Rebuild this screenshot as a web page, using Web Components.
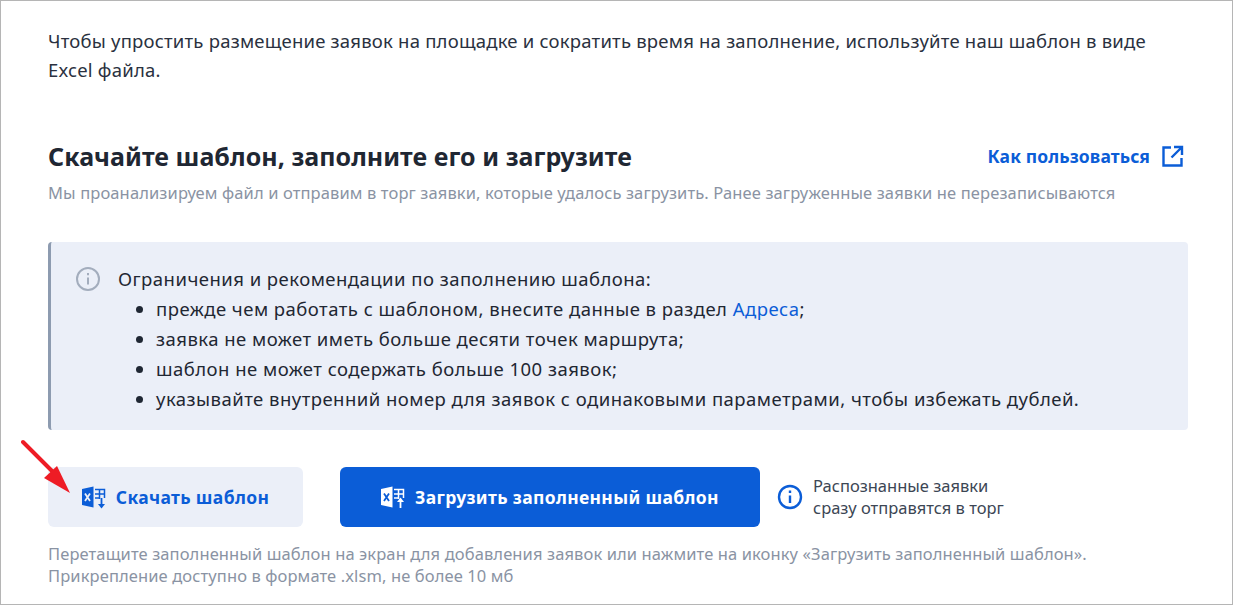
<!DOCTYPE html>
<html><head><meta charset="utf-8">
<style>
html,body{margin:0;background:#fff}
</style></head><body>
<import-page></import-page>
<script>
// иконка excel, стрелка вниз или вверх
const xlIcon = (arrow) => `<svg width="24" height="23" viewBox="0 0 24 23" fill="none"><path d="M0 3 11.500 .5v21L0 19z" fill="currentColor"/><path d="M3 7.500l5 7.500M8 7.500 3 15" stroke="var(--bg)" stroke-width="1.800"/><path d="M13 3.500H22.500V12M13 8H22.500M13 12H18M17.500 3.500V13" stroke="currentColor" stroke-width="1.500"/>${arrow == 'down' ? '<path d="M19.500 12v7" stroke="currentColor" stroke-width="1.800"/><path d="M16 18h7L19.500 22.500z" fill="currentColor"/>' : '<path d="M19.500 22v-7" stroke="currentColor" stroke-width="1.800"/><path d="M16 16h7L19.500 11.500z" fill="currentColor"/>'}</svg>`

class XBtn extends HTMLElement {
  constructor() {
    super()
    this.attachShadow({mode: 'open'})
  }
  connectedCallback() {
    this.shadowRoot.innerHTML = `<style>
    :host{display:inline-flex;align-items:center;justify-content:center;gap:10px;height:60px;border-radius:6px;font:700 17.500px "Noto Sans",sans-serif;letter-spacing:.35px;box-sizing:border-box}
    :host([kind=light]){background:#ebeff8;color:#0b5dd7;--bg:#ebeff8;width:255px}
    :host([kind=main]){background:#0b5dd7;color:#fff;--bg:#0b5dd7;width:420px}
    svg{display:block}
    </style>${xlIcon(this.getAttribute('arrow'))}<slot></slot>`
  }
}

class NoteBox extends HTMLElement {
  constructor() {
    super()
    this.attachShadow({mode: 'open'}).innerHTML = `<style>
    :host{display:flex;gap:18px;background:#ebeff8;border-left:3px solid #8d9bb0;border-radius:4px;padding:22px 20px 16px 25px;color:#1f2733;font:400 18.500px/30px "Noto Sans",sans-serif;letter-spacing:.47px}
    svg{flex:none;margin-top:3px}
    ul{margin:0;padding:0 0 0 38px}
    a{color:#0b5dd7;text-decoration:none}
    </style>
    <svg width="24" height="24" viewBox="0 0 24 24" fill="none" stroke="#a3adbd" stroke-width="2"><circle cx="12" cy="12" r="11"/><path d="M12 10.500v7M12 6v2.200"/></svg>
    <div>Ограничения и рекомендации по заполнению шаблона:
    <ul><li>прежде чем работать с шаблоном, внесите данные в раздел <a>Адреса</a>;</li>
    <li>заявка не может иметь больше десяти точек маршрута;</li>
    <li>шаблон не может содержать больше 100 заявок;</li>
    <li>указывайте внутренний номер для заявок с одинаковыми параметрами, чтобы избежать дублей.</li></ul></div>`
  }
}

class ImportPage extends HTMLElement {
  constructor() {
    super()
    this.attachShadow({mode: 'open'}).innerHTML = `<style>
    :host{display:block;position:relative;width:1233px;height:605px;box-sizing:border-box;border:1px solid #b5b5b5;padding:25px 44px 0 47px;font-family:"Noto Sans",sans-serif;color:#1f2733;overflow:hidden}
    .intro{font-size:18.500px;line-height:29px;letter-spacing:.21px;color:#2a3140}
    .head{display:flex;justify-content:space-between;align-items:center;margin-top:54px}
    h2{margin:0;font:700 25px/36px "Noto Sans",sans-serif;letter-spacing:.05px}
    .how{display:flex;align-items:center;gap:12px;color:#0b5dd7;font:700 17.500px "Noto Sans",sans-serif;letter-spacing:.12px;margin-right:4px}
    .sub{color:#8a93a3;font-size:16.500px;line-height:22px;margin:8px 0 38px;letter-spacing:.12px}
    .btns{display:flex;align-items:center;margin-top:37px}
    x-btn+x-btn{margin-left:37px}
    .tip{display:flex;align-items:center;gap:10px;margin-left:17px;font-size:16.500px;line-height:22px;color:#3c4654}
    .foot{color:#8a93a3;font-size:16.500px;line-height:22px;margin-top:16px;letter-spacing:.11px}
    .arrow{position:absolute;left:20px;top:438px}
    </style>
    <div class="intro">Чтобы упростить размещение заявок на площадке и сократить время на заполнение, используйте наш шаблон в виде Excel файла.</div>
    <div class="head"><h2>Скачайте шаблон, заполните его и загрузите</h2>
    <span class="how">Как пользоваться <svg width="22" height="22" viewBox="0 0 22 22" fill="none" stroke="#0b5dd7" stroke-width="2.400"><path d="M9 2.500H1.500v18h18V13M12 2H20v8M20 2 9.500 12.500"/></svg></span></div>
    <div class="sub">Мы проанализируем файл и отправим в торг заявки, которые удалось загрузить. Ранее загруженные заявки не перезаписываются</div>
    <note-box></note-box>
    <div class="btns"><x-btn kind="light" arrow="down">Скачать шаблон</x-btn><x-btn kind="main" arrow="up">Загрузить заполненный шаблон</x-btn>
    <div class="tip"><svg width="26" height="26" viewBox="0 0 26 26" fill="none" stroke="#0b5dd7" stroke-width="2.400"><circle cx="13" cy="13" r="11"/><path d="M13 11.500v7.500M13 6.500v2.600"/></svg><span>Распознанные заявки<br>сразу отправятся в торг</span></div></div>
    <div class="foot">Перетащите заполненный шаблон на экран для добавления заявок или нажмите на иконку «Загрузить заполненный шаблон».<br>Прикрепление доступно в формате .xlsm, не более 10 мб</div>
    <svg class="arrow" width="56" height="60" viewBox="0 0 56 60"><path d="M2 3 36 37" stroke="#ee1c25" stroke-width="4" stroke-linecap="round"/><path d="M49 54 23 39 36 27z" fill="#ee1c25"/></svg>`
  }
}
customElements.define('x-btn', XBtn)
customElements.define('note-box', NoteBox)
customElements.define('import-page', ImportPage)
</script>
</body></html>
